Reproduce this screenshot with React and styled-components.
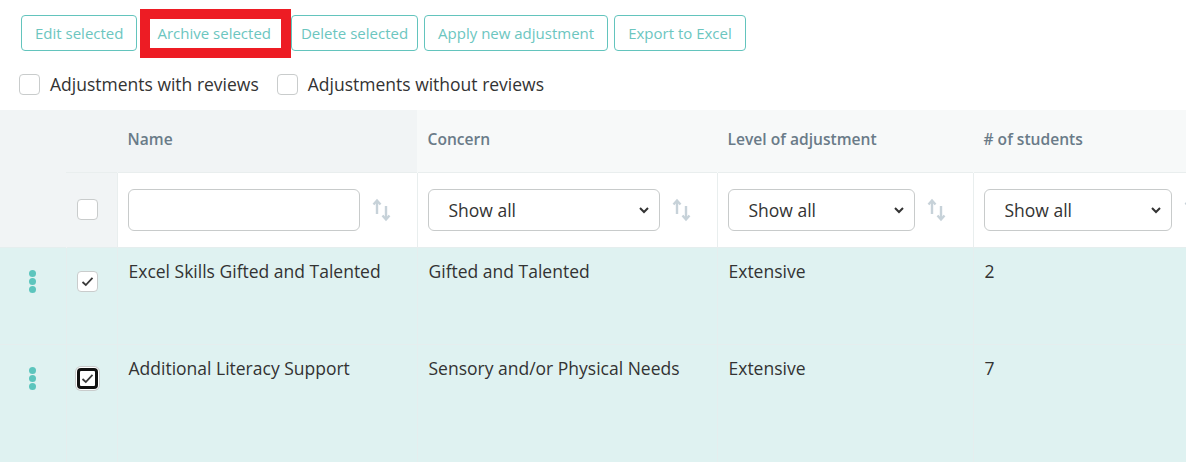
import React from "react";
import styled, { createGlobalStyle } from "styled-components";

const GlobalStyle = createGlobalStyle`
  html, body {
    margin: 0;
    padding: 0;
    background: #ffffff;
    overflow: hidden;
  }
  body {
    font-family: "Open Sans", "Noto Sans", sans-serif;
    color: #333;
  }
`;

const Page = styled.div`
  width: 1186px;
  height: 462px;
  overflow: hidden;
`;

const Toolbar = styled.div`
  display: flex;
  gap: 6px;
  padding: 15px 0 0 21px;
`;

const ActionButton = styled.button`
  position: relative;
  height: 36px;
  padding: 0 ${(p) => p.$pad || 13}px;
  border: 1px solid #63c4bd;
  border-radius: 4px;
  background: #fff;
  color: #6cc6bf;
  font-family: inherit;
  font-size: 15px;
  cursor: pointer;

  ${(p) =>
    p.$highlighted &&
    `
    &::after {
      content: "";
      position: absolute;
      top: -7px;
      left: -4px;
      right: -7px;
      bottom: -8px;
      border: 10px solid #ed1c24;
      pointer-events: none;
    }
  `}
`;

const FilterRow = styled.div`
  display: flex;
  align-items: center;
  gap: 18px;
  padding: 21px 0 0 19px;
  height: 24px;
`;

const FilterLabel = styled.label`
  display: flex;
  align-items: center;
  gap: 10px;
  font-size: 17.5px;
  color: #333;
`;

const Box = styled.span`
  box-sizing: border-box;
  display: flex;
  align-items: center;
  justify-content: center;
  width: 21px;
  height: 21px;
  border-radius: 4px;
  background: #fff;
  border: ${(p) => (p.$focused ? "3px solid #111" : "1px solid #c9cccc")};
  box-shadow: ${(p) => (p.$focused ? "0 0 0 1px #fff, 0 0 0 2px #c9cccc" : "none")};
  flex-shrink: 0;
`;

const Table = styled.table`
  margin-top: 14px;
  width: 1240px;
  border-collapse: collapse;
  table-layout: fixed;
`;

const HeadRow = styled.tr`
  height: 62px;
`;

const FilterTableRow = styled.tr`
  height: 75px;
`;

const HeadCell = styled.th`
  padding: 0 10px 4px;
  text-align: left;
  font-size: 15.6px;
  font-weight: 600;
  color: #6a7b88;
  background: ${(p) => (p.$sorted ? "#f1f4f5" : "#f7f9f9")};
  border-left: 1px solid ${(p) => (p.$sorted ? "#f1f4f5" : "#f7f9f9")};
  ${(p) => p.$handle && "background: #f1f4f5; border-left: none;"}
`;

const FilterCell = styled.td`
  padding: 0 10px;
  background: ${(p) => (p.$gray ? "#f1f4f5" : "#fff")};
  border-top: 1px solid #e9eeee;
  border-left: 1px solid ${(p) => (p.$gray ? "#f1f4f5" : "#e9eeee")};
  vertical-align: middle;
`;

const FilterInner = styled.div`
  display: flex;
  align-items: center;
  gap: 12px;
`;

const TextInput = styled.input`
  box-sizing: border-box;
  width: 232px;
  height: 42px;
  border: 1px solid #c8cbcb;
  border-radius: 6px;
  background: #fff;
  font-family: inherit;
  font-size: 17.5px;
  padding: 0 12px;
`;

const SelectWrap = styled.div`
  position: relative;
  width: ${(p) => p.$width}px;
  height: 42px;
  flex-shrink: 0;

  svg {
    position: absolute;
    right: 10px;
    top: 16px;
    pointer-events: none;
  }
`;

const Select = styled.select`
  appearance: none;
  box-sizing: border-box;
  width: 100%;
  height: 42px;
  border: 1px solid #c8cbcb;
  border-radius: 6px;
  background: #fff;
  font-family: inherit;
  font-size: 17.5px;
  color: #333;
  padding: 0 0 0 20px;
`;

const Row = styled.tr`
  height: ${(p) => p.$height}px;
  background: #dff2f1;
`;

const Cell = styled.td`
  padding: 11px 11px 0;
  vertical-align: top;
  font-size: 17.5px;
  color: #333;
  border-top: 1px solid #e5eeee;
  border-left: 1px solid #e5eeee;
  ${(p) => p.$first && "border-left: none; padding: 22px 0 0;"}
  ${(p) => p.$check && "padding: 23px 0 0 10px;"}
`;

const Dots = styled.div`
  display: flex;
  flex-direction: column;
  align-items: center;
  gap: 1px;

  span {
    width: 7px;
    height: 7px;
    border-radius: 50%;
    background: #5cc5bd;
  }
`;

const SortIcon = () => (
  <svg width="20" height="26" viewBox="0 0 20 26" fill="none" stroke="#c7d2d9" strokeWidth="2.4">
    <path d="M5 17V4" />
    <path d="M1.5 7.5L5 3.5L8.5 7.5" />
    <path d="M14 9V22" />
    <path d="M10.5 18.5L14 22.5L17.5 18.5" />
  </svg>
);

const Chevron = () => (
  <svg width="12" height="10" viewBox="0 0 12 10" fill="none" stroke="#333" strokeWidth="2">
    <path d="M2 3L6 7L10 3" />
  </svg>
);

const Check = () => (
  <svg width="13" height="11" viewBox="0 0 13 11" fill="none" stroke="#3a3a3a" strokeWidth="1.8">
    <path d="M1.5 6L4.8 9L11.5 1.8" />
  </svg>
);

const ShowAll = ({ width }) => (
  <SelectWrap $width={width}>
    <Select defaultValue="all">
      <option value="all">Show all</option>
    </Select>
    <Chevron />
  </SelectWrap>
);

const rows = [
  { name: "Excel Skills Gifted and Talented", concern: "Gifted and Talented", level: "Extensive", students: 2, height: 97 },
  { name: "Additional Literacy Support", concern: "Sensory and/or Physical Needs", level: "Extensive", students: 7, height: 130, focused: true },
];

export default function App() {
  return (
    <Page>
      <GlobalStyle />
      <Toolbar>
        <ActionButton>Edit selected</ActionButton>
        <ActionButton $highlighted>Archive selected</ActionButton>
        <ActionButton $pad={9}>Delete selected</ActionButton>
        <ActionButton>Apply new adjustment</ActionButton>
        <ActionButton>Export to Excel</ActionButton>
      </Toolbar>
      <FilterRow>
        <FilterLabel>
          <Box />
          Adjustments with reviews
        </FilterLabel>
        <FilterLabel>
          <Box />
          Adjustments without reviews
        </FilterLabel>
      </FilterRow>
      <Table>
        <colgroup>
          <col style={{ width: 66 }} />
          <col style={{ width: 51 }} />
          <col style={{ width: 300 }} />
          <col style={{ width: 300 }} />
          <col style={{ width: 256 }} />
          <col />
        </colgroup>
        <thead>
          <HeadRow>
            <HeadCell $handle rowSpan={2} />
            <HeadCell $handle />
            <HeadCell $sorted>Name</HeadCell>
            <HeadCell>Concern</HeadCell>
            <HeadCell>Level of adjustment</HeadCell>
            <HeadCell># of students</HeadCell>
          </HeadRow>
          <FilterTableRow>
            <FilterCell $gray>
              <Box />
            </FilterCell>
            <FilterCell>
              <FilterInner>
                <TextInput type="text" />
                <SortIcon />
              </FilterInner>
            </FilterCell>
            <FilterCell>
              <FilterInner>
                <ShowAll width={232} />
                <SortIcon />
              </FilterInner>
            </FilterCell>
            <FilterCell>
              <FilterInner>
                <ShowAll width={187} />
                <SortIcon />
              </FilterInner>
            </FilterCell>
            <FilterCell>
              <FilterInner>
                <ShowAll width={188} />
                <SortIcon />
              </FilterInner>
            </FilterCell>
          </FilterTableRow>
        </thead>
        <tbody>
          {rows.map((r) => (
            <Row key={r.name} $height={r.height}>
              <Cell $first>
                <Dots>
                  <span />
                  <span />
                  <span />
                </Dots>
              </Cell>
              <Cell $check>
                <Box $focused={r.focused}>
                  <Check />
                </Box>
              </Cell>
              <Cell>{r.name}</Cell>
              <Cell>{r.concern}</Cell>
              <Cell>{r.level}</Cell>
              <Cell>{r.students}</Cell>
            </Row>
          ))}
        </tbody>
      </Table>
    </Page>
  );
}
